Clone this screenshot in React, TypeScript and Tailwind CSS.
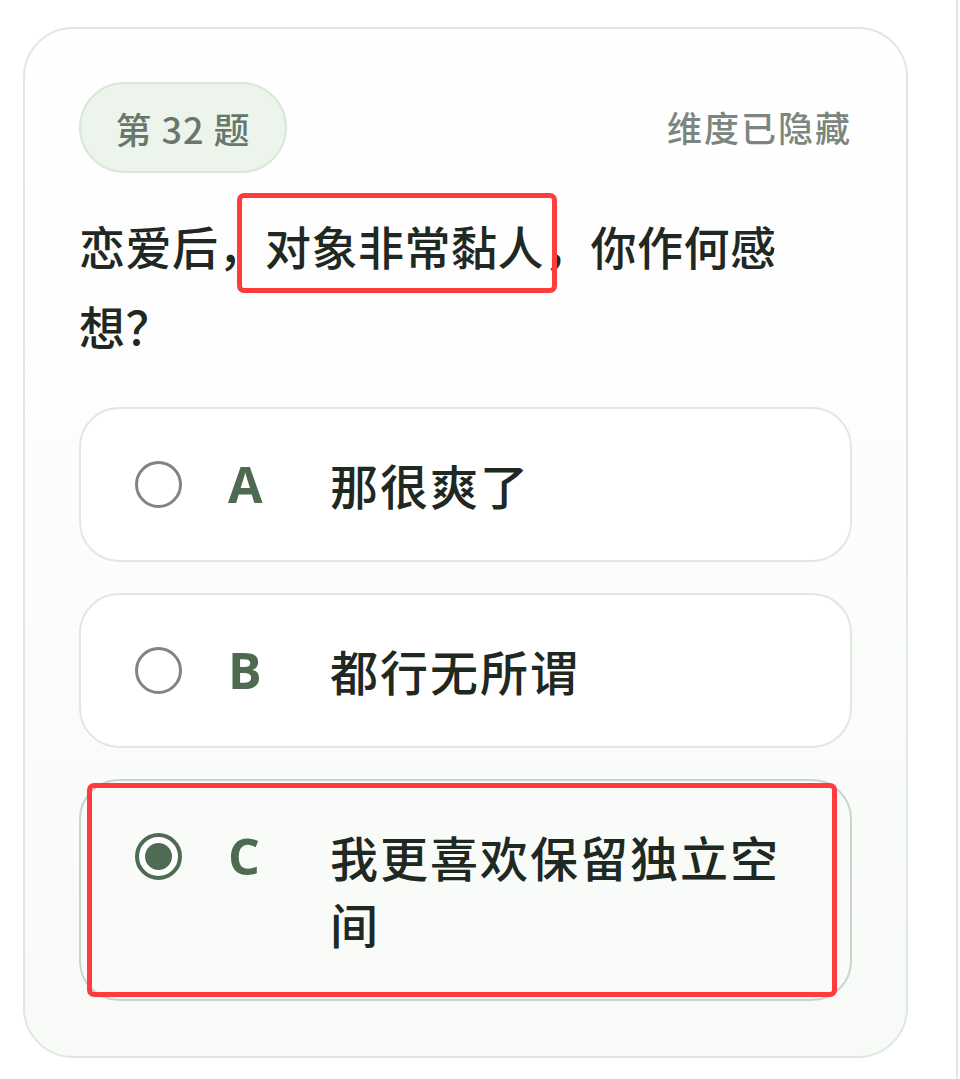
import { useState } from 'react';

type Option = { key: string; label: string };

const options: Option[] = [
    { key: 'A', label: '那很爽了' },
    { key: 'B', label: '都行无所谓' },
    { key: 'C', label: '我更喜欢保留独立空间' },
];

const cjk = { fontFamily: '"Noto Sans CJK SC", "Noto Sans", sans-serif' };

function Radio({ checked }: { checked: boolean }) {
    return checked ? (
        <span className="flex h-[47px] w-[47px] items-center justify-center rounded-full border-[4px] border-[#4f6b54] bg-white">
            <span className="h-[27px] w-[27px] rounded-full bg-[#4f6b54]" />
        </span>
    ) : (
        <span className="h-[47px] w-[47px] rounded-full border-[3px] border-[#808482] bg-white" />
    );
}

export default function App() {
    const [selected, setSelected] = useState('C');

    return (
        <div className="flex min-h-[1079px] bg-white" style={cjk}>
            <div className="flex-1 pl-[23px] pr-[48px] pt-[27px] pb-[22px]">
                <div className="rounded-[50px] border-2 border-[#dde9de] bg-gradient-to-b from-white to-[#f8faf8] px-[54px] pt-[53px] pb-[55px]">
                    {/* Header */}
                    <div className="flex items-center justify-between">
                        <span className="flex h-[91px] w-[208px] items-center justify-center rounded-full border-2 border-[#d9e7da] bg-[#ecf4ec] text-[36px] font-medium tracking-[1px] text-[#68766b]">
                            第&nbsp;32&nbsp;题
                        </span>
                        <span className="text-[35px] font-medium tracking-[2px] text-[#7b867e]">维度已隐藏</span>
                    </div>

                    {/* Question */}
                    <p className="mt-[32px] text-[46px] font-medium leading-[80px] tracking-[0.5px] text-[#1f2822]">
                        恋爱后，
                        <span className="relative">
                            对象非常黏人
                            <span className="pointer-events-none absolute -left-[28px] -right-[13px] -top-[19px] -bottom-[15px] rounded-[7px] border-[5px] border-[#ff3b3b]" />
                        </span>
                        ，你作何感想？
                    </p>

                    {/* Options */}
                    <div className="mt-[42px] flex flex-col gap-[31px]">
                        {options.map((o) => {
                            const checked = selected === o.key;
                            return (
                                <button
                                    key={o.key}
                                    onClick={() => setSelected(o.key)}
                                    className={`relative flex items-start rounded-[40px] border-2 pl-[54px] pr-[48px] py-[42px] text-left ${checked ? 'border-[#c8d6ca] bg-[#f9fbf9]' : 'border-[#dfeadf] bg-white'
                                        }`}
                                >
                                    <span className="flex h-[67px] items-center">
                                        <Radio checked={checked} />
                                    </span>
                                    <span
                                        className="flex h-[67px] w-[148px] shrink-0 items-center pl-[46px] text-[50px] font-bold text-[#4e6b52]"
                                        style={{ fontFamily: '"Open Sans", "Noto Sans", sans-serif' }}
                                    >
                                        {o.key}
                                    </span>
                                    <span className="text-[48px] font-medium leading-[67px] tracking-[2px] text-[#202822]">
                                        {o.label}
                                    </span>
                                    {checked && (
                                        <span className="pointer-events-none absolute left-[6px] top-[2px] h-[214px] w-[750px] rounded-[7px] border-[5px] border-[#ff3b3b]" />
                                    )}
                                </button>
                            );
                        })}
                    </div>
                </div>
            </div>
            <div className="w-[2px] bg-[#dfeadf]" />
            <div className="w-[2px]" />
        </div>
    );
}
